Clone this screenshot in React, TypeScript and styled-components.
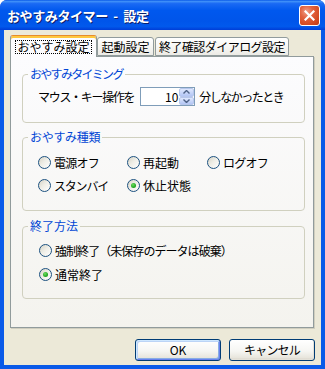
import React from 'react';
import styled, { createGlobalStyle } from 'styled-components';

const GlobalStyle = createGlobalStyle`
  html, body { margin: 0; padding: 0; background: #ffffff; }
  body {
    font-family: "Noto Sans CJK JP", "Noto Sans", sans-serif;
    font-size: 12px;
    color: #000;
  }
  * { box-sizing: border-box; }
`;

const Window = styled.div`
  width: 325px;
  height: 369px;
  display: flex;
  flex-direction: column;
  border-radius: 7px 7px 0 0;
  overflow: hidden;
  background: #0842d8;
`;

const TitleBar = styled.div`
  height: 30px;
  flex: none;
  display: flex;
  align-items: center;
  justify-content: space-between;
  padding: 0 5px 0 7px;
  background: linear-gradient(
    180deg,
    #0a5ae8 0%,
    #3d8ef8 5%,
    #1a6af4 12%,
    #0058ee 35%,
    #0055ea 70%,
    #0159ec 88%,
    #003dd7 100%
  );
  color: #fff;
  font-weight: bold;
  font-size: 13px;
  letter-spacing: -0.4px;
  word-spacing: 3px;
  text-shadow: 1px 1px 0 #0a1e6c;
`;

const CloseButton = styled.div`
  width: 21px;
  height: 21px;
  border: 1px solid #fff;
  border-radius: 3px;
  background: radial-gradient(circle at 35% 30%, #f0a08a 0%, #e2623f 35%, #d2481f 75%, #c03c16 100%);
  display: flex;
  align-items: center;
  justify-content: center;
`;

const Frame = styled.div`
  flex: 1;
  display: flex;
  flex-direction: column;
  background: #ece9d8;
  border: 4px solid #0a5ae8;
  border-top: none;
  padding: 5px 7px 0 6px;
`;

const TabRow = styled.div`
  display: flex;
  align-items: flex-end;
  height: 22px;
  margin-bottom: -1px;
  position: relative;
  z-index: 1;
`;

const Tab = styled.div<{ $active?: boolean; $w: number; $tight?: boolean; $ls?: number }>`
  width: ${(p) => p.$w}px;
  height: ${(p) => (p.$active ? 22 : 19)}px;
  margin-bottom: ${(p) => (p.$active ? 0 : 1)}px;
  margin-left: ${(p) => (p.$tight ? 1 : 0)}px;
  display: flex;
  align-items: center;
  justify-content: center;
  border: 1px solid #919b9c;
  border-bottom: ${(p) => (p.$active ? 'none' : '1px solid #919b9c')};
  border-top-color: ${(p) => (p.$active ? '#e68b2c' : '#919b9c')};
  border-radius: 3px 3px 0 0;
  background: ${(p) =>
    p.$active ? '#fcfcfe' : 'linear-gradient(180deg, #ffffff 0%, #f7f7f4 50%, #ecebe6 100%)'};
  box-shadow: ${(p) => (p.$active ? 'inset 0 2px 0 #ffc83c' : 'none')};
  padding-top: ${(p) => (p.$active ? 0 : 1)}px;
  line-height: 14px;
  letter-spacing: ${(p) => p.$ls ?? 0}px;
  white-space: nowrap;
`;

const FocusLabel = styled.span`
  border: 1px dotted #000;
  padding: 0 1px;
  line-height: 12px;
`;

const Panel = styled.div`
  height: 272px;
  border: 1px solid #919b9c;
  background: linear-gradient(180deg, #fcfcfe 0%, #f4f3ee 100%);
  box-shadow: 1px 1px 0 #d0cebf;
  padding: 10px 8px 0 11px;
  display: flex;
  flex-direction: column;
`;

const Group = styled.fieldset<{ $gap: number }>`
  margin: 0 0 ${(p) => p.$gap}px 0;
  padding: 0;
  border: 1px solid #d0d0bf;
  border-radius: 4px;
  min-inline-size: 0;
`;

const Legend = styled.legend<{ $ls?: number }>`
  margin-left: 5px;
  padding: 0 2px;
  color: #0046d5;
  line-height: 14px;
  font-size: 12px;
  letter-spacing: ${(p) => p.$ls ?? 0}px;
`;

const GroupBody = styled.div<{ $pt: number; $pb: number; $pl: number }>`
  padding: ${(p) => p.$pt}px 0 ${(p) => p.$pb}px ${(p) => p.$pl}px;
`;

const TimingRow = styled.div`
  display: flex;
  align-items: center;
  height: 19px;
  line-height: 14px;
`;

const Text = styled.span<{ $ls?: number }>`
  letter-spacing: ${(p) => p.$ls ?? 0}px;
  white-space: nowrap;
`;

const Spin = styled.div`
  width: 55px;
  height: 19px;
  border: 1px solid #7f9db9;
  background: #fff;
  display: flex;
  align-items: center;
  margin: 0 4px 0 6px;
`;

const SpinValue = styled.span`
  flex: 1;
  text-align: right;
  padding-right: 1px;
  line-height: 14px;
`;

const SpinButtons = styled.div`
  width: 15px;
  height: 17px;
  display: flex;
  flex-direction: column;
`;

const SpinBtn = styled.div`
  flex: 1;
  border: 1px solid #b7c7ec;
  border-radius: 2px;
  background: linear-gradient(180deg, #dfe8fd 0%, #c4d3f8 60%, #b3c6f4 100%);
  display: flex;
  align-items: center;
  justify-content: center;
`;

const RadioGrid = styled.div<{ $cols: string; $rowGap: number }>`
  display: grid;
  grid-template-columns: ${(p) => p.$cols};
  row-gap: ${(p) => p.$rowGap}px;
`;

const RadioItem = styled.label`
  display: flex;
  align-items: center;
  height: 13px;
  line-height: 13px;
  gap: 3px;
  white-space: nowrap;
`;

const RadioCircle = styled.span<{ $checked?: boolean }>`
  width: 13px;
  height: 13px;
  flex: none;
  border-radius: 50%;
  border: 1px solid #1c5180;
  background: linear-gradient(135deg, #d6d3c6 0%, #eeede6 45%, #ffffff 100%);
  display: flex;
  align-items: center;
  justify-content: center;
  &::after {
    content: '';
    display: ${(p) => (p.$checked ? 'block' : 'none')};
    width: 5px;
    height: 5px;
    border-radius: 50%;
    background: radial-gradient(circle at 40% 35%, #6fdc5e 0%, #29ad29 55%, #138a13 100%);
  }
`;

const ButtonRow = styled.div`
  display: flex;
  justify-content: flex-end;
  gap: 8px;
  margin-top: 11px;
  margin-right: -1px;
`;

const Button = styled.button<{ $default?: boolean; $ls?: number }>`
  width: 86px;
  height: 22px;
  padding: 0;
  border: 1px solid #003c74;
  border-radius: 3px;
  background: linear-gradient(180deg, #ffffff 0%, #f6f6f3 55%, #e8e6dd 88%, #d6d0c5 100%);
  font-family: inherit;
  font-size: 12px;
  color: #000;
  line-height: 14px;
  letter-spacing: ${(p) => p.$ls ?? 0}px;
  box-shadow: ${(p) =>
    p.$default
      ? 'inset 1px 1px 0 #cee7ff, inset -1px -1px 0 #6982ee, inset 2px 2px 0 #bcd4f6, inset -2px -2px 0 #89ade4'
      : 'inset -1px -1px 0 #e3e1d8'};
`;

function Radio({ label, checked, ls }: { label: string; checked?: boolean; ls?: number }) {
  return (
    <RadioItem>
      <RadioCircle $checked={checked} />
      <Text $ls={ls}>{label}</Text>
    </RadioItem>
  );
}

function Chevron({ up }: { up?: boolean }) {
  return (
    <svg width="7" height="4" viewBox="0 0 7 4">
      <path
        d={up ? 'M0.5 3.5 L3.5 0.5 L6.5 3.5' : 'M0.5 0.5 L3.5 3.5 L6.5 0.5'}
        fill="none"
        stroke="#4d6185"
        strokeWidth="1.4"
      />
    </svg>
  );
}

export default function App() {
  return (
    <>
      <GlobalStyle />
      <Window>
        <TitleBar>
          <span>おやすみタイマー - 設定</span>
          <CloseButton>
            <svg width="11" height="11" viewBox="0 0 11 11">
              <path d="M1.5 1.5 L9.5 9.5 M9.5 1.5 L1.5 9.5" stroke="#fff" strokeWidth="2.2" strokeLinecap="square" />
            </svg>
          </CloseButton>
        </TitleBar>
        <Frame>
          <TabRow>
            <Tab $active $w={87}>
              <FocusLabel>おやすみ設定</FocusLabel>
            </Tab>
            <Tab $w={57}>起動設定</Tab>
            <Tab $w={134} $tight $ls={-0.55}>
              終了確認ダイアログ設定
            </Tab>
          </TabRow>
          <Panel>
            <Group $gap={7}>
              <Legend $ls={-1.7}>おやすみタイミング</Legend>
              <GroupBody $pt={6} $pb={16} $pl={15}>
                <TimingRow>
                  <Text $ls={-1.3}>マウス・キー操作を</Text>
                  <Spin>
                    <SpinValue>10</SpinValue>
                    <SpinButtons>
                      <SpinBtn>
                        <Chevron up />
                      </SpinBtn>
                      <SpinBtn>
                        <Chevron />
                      </SpinBtn>
                    </SpinButtons>
                  </Spin>
                  <Text $ls={-1.5}>分しなかったとき</Text>
                </TimingRow>
              </GroupBody>
            </Group>
            <Group $gap={8}>
              <Legend $ls={-0.3}>おやすみ種類</Legend>
              <GroupBody $pt={12} $pb={18} $pl={15}>
                <RadioGrid $cols="89px 80px auto" $rowGap={10}>
                  <Radio label="電源オフ" ls={-0.75} />
                  <Radio label="再起動" />
                  <Radio label="ログオフ" ls={-0.75} />
                  <Radio label="スタンバイ" ls={-1.2} />
                  <Radio label="休止状態" checked />
                </RadioGrid>
              </GroupBody>
            </Group>
            <Group $gap={0}>
              <Legend>終了方法</Legend>
              <GroupBody $pt={11} $pb={17} $pl={16}>
                <RadioGrid $cols="auto" $rowGap={11}>
                  <Radio label="強制終了（未保存のデータは破棄）" ls={-0.95} />
                  <Radio label="通常終了" checked />
                </RadioGrid>
              </GroupBody>
            </Group>
          </Panel>
          <ButtonRow>
            <Button $default>OK</Button>
            <Button $ls={-0.8}>キャンセル</Button>
          </ButtonRow>
        </Frame>
      </Window>
    </>
  );
}
